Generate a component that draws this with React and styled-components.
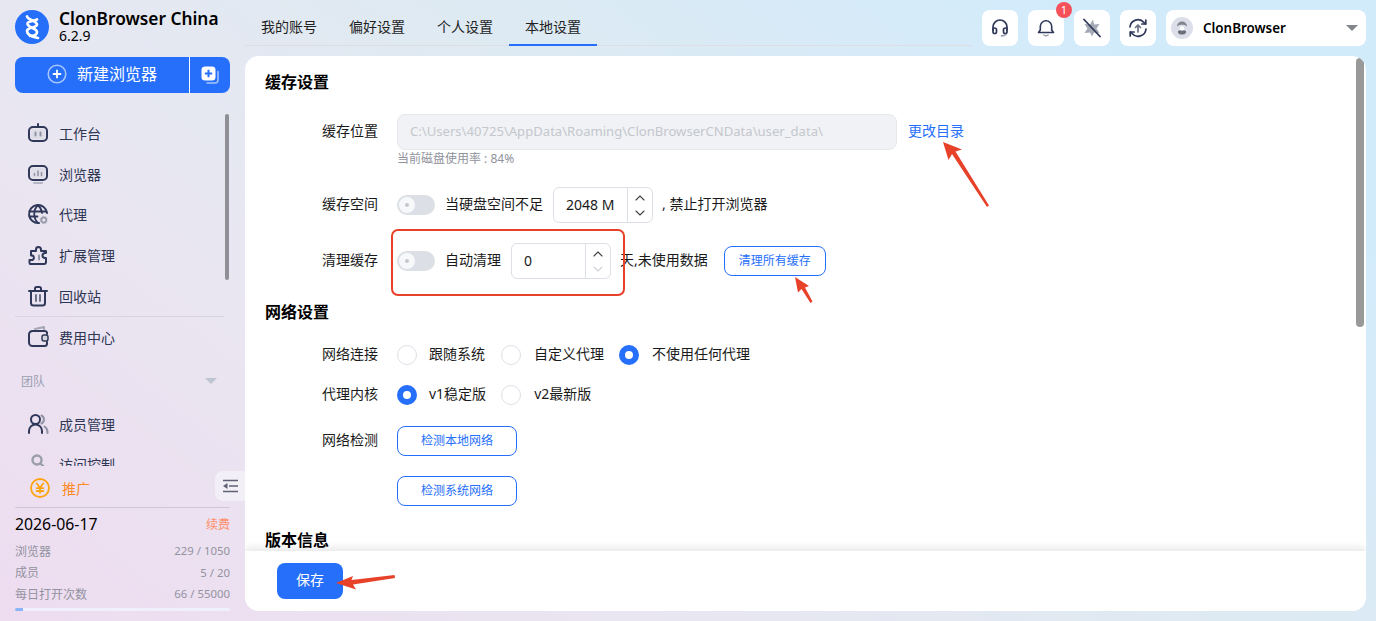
import React from "react";
import styled, { createGlobalStyle } from "styled-components";

const GlobalStyle = createGlobalStyle`
  html, body {
    margin: 0;
    padding: 0;
    width: 1376px;
    height: 621px;
    overflow: hidden;
  }
  body {
    font-family: "Noto Sans", "Noto Sans CJK SC", sans-serif;
    color: #1a1a1a;
  }
  * { box-sizing: border-box; }
`;

const BLUE = "#266ffb";
const NAVY = "#2f3859";

const Page = styled.div`
  position: relative;
  display: flex;
  width: 1376px;
  height: 621px;
  overflow: hidden;
  background: linear-gradient(38deg, #eedcf0 0%, #e9e6f1 30%, #dfeaf2 55%, #d2ebfb 85%, #d2ebfb 100%);
`;

/* sidebar */
const Sidebar = styled.aside`
  position: relative;
  display: flex;
  flex-direction: column;
  width: 245px;
  flex: none;
  padding: 10px 15px 0;
`;

const Brand = styled.div`
  display: flex;
  align-items: center;
  gap: 10px;
  height: 34px;
`;

const BrandText = styled.div`
  display: flex;
  flex-direction: column;
  color: #000;
`;

const BrandName = styled.div`
  font-size: 17.3px;
  font-weight: 600;
  line-height: 19px;
  margin-top: -2px;
  white-space: nowrap;
`;

const BrandVersion = styled.div`
  font-size: 14px;
  line-height: 16px;
`;

const NewButton = styled.div`
  display: flex;
  height: 36px;
  margin-top: 13px;
  border-radius: 8px;
  overflow: hidden;
  background: ${BLUE};
  color: #fff;
  flex: none;
`;

const NewMain = styled.div`
  display: flex;
  align-items: center;
  justify-content: center;
  gap: 10px;
  width: 175px;
  font-size: 16px;
  line-height: 34px;
  padding-bottom: 2px;
  border-right: 1px solid #fff;
`;

const NewCopy = styled.div`
  flex: 1;
  display: flex;
  align-items: center;
  justify-content: center;
`;

const NavArea = styled.nav`
  position: relative;
  flex: none;
  height: 373px;
  overflow: hidden;
  margin-right: -15px;
  padding-top: 20px;
`;

const NavItem = styled.div`
  display: flex;
  align-items: center;
  gap: 10px;
  height: 40.6px;
  padding-left: 12px;
  font-size: 14px;
  color: #2f3654;
`;

const NavDivider = styled.div`
  width: 209px;
  height: 1px;
  background: #d8d5e0;
`;

const NavGroup = styled.div`
  display: flex;
  align-items: center;
  justify-content: space-between;
  width: 209px;
  height: 20px;
  margin: 13px 0;
  padding: 0 7px 0 6px;
  font-size: 12px;
  color: #9a9fb0;
`;

const GroupCaret = styled.span`
  width: 0;
  height: 0;
  border-left: 6px solid transparent;
  border-right: 6px solid transparent;
  border-top: 6px solid #bfc4d2;
`;

const NavScroll = styled.div`
  position: absolute;
  left: 210px;
  top: 21px;
  width: 4px;
  height: 166px;
  border-radius: 2px;
  background: #908f96;
`;

const Promo = styled.div`
  display: flex;
  align-items: center;
  gap: 12px;
  height: 30px;
  margin-top: 7px;
  padding-left: 15px;
  font-size: 14px;
  color: #ff8a1f;
`;

const Collapse = styled.div`
  position: absolute;
  left: 215px;
  top: 471px;
  display: flex;
  align-items: center;
  justify-content: center;
  width: 30px;
  height: 30px;
  border-radius: 8px 0 0 8px;
  background: #f2eff6;
`;

const PlanBox = styled.div`
  margin-top: 4px;
  border-top: 1px solid #cdc8d2;
`;

const PlanHead = styled.div`
  display: flex;
  align-items: center;
  justify-content: space-between;
  height: 22px;
  margin-top: 5px;
  margin-bottom: 5px;
`;

const PlanDate = styled.span`
  font-size: 15.8px;
  color: #000;
`;

const Renew = styled.span`
  font-size: 12px;
  color: #ff8f6b;
`;

const PlanRow = styled.div`
  display: flex;
  align-items: center;
  justify-content: space-between;
  height: 21.5px;
  font-size: 12px;
  color: #92939f;
`;

const PlanCount = styled.span`
  font-size: 11.4px;
`;

const Progress = styled.div`
  height: 3px;
  margin-top: 3px;
  border-radius: 2px;
  background: #eff0fb;
  overflow: hidden;
`;

const ProgressFill = styled.div`
  height: 100%;
  background: #8ab4fb;
`;

/* main column */
const Main = styled.main`
  flex: 1;
  display: flex;
  flex-direction: column;
  padding-right: 10px;
  min-width: 0;
`;

const TopBar = styled.header`
  display: flex;
  height: 56px;
  flex: none;
`;

const Tabs = styled.div`
  display: flex;
  align-items: flex-start;
  width: 727px;
  height: 46px;
  border-bottom: 1px solid #dcdee4;
  flex: none;
`;

const Tab = styled.div`
  width: 88px;
  height: 46px;
  flex: none;
  font-size: 14px;
  line-height: 53px;
  text-align: center;
  color: #1f1f1f;
  border-bottom: 2px solid ${(p) => (p.$active ? BLUE : "transparent")};
`;

const Tools = styled.div`
  display: flex;
  gap: 10px;
  margin-left: 10px;
  padding-top: 10px;
`;

const ToolButton = styled.div`
  position: relative;
  display: flex;
  align-items: center;
  justify-content: center;
  width: 36px;
  height: 36px;
  border-radius: 8px;
  background: #fff;
`;

const Badge = styled.span`
  position: absolute;
  top: -8px;
  right: -8px;
  width: 16px;
  height: 16px;
  border-radius: 50%;
  background: #f5515a;
  color: #fff;
  font-size: 11px;
  line-height: 16px;
  text-align: center;
`;

const UserMenu = styled.div`
  display: flex;
  align-items: center;
  width: 200px;
  height: 36px;
  padding: 0 8px 0 5px;
  border-radius: 8px;
  background: #fff;
`;

const UserName = styled.span`
  flex: 1;
  margin-left: 10px;
  font-size: 13.4px;
  font-weight: 600;
  color: #000;
`;

const UserCaret = styled.span`
  width: 0;
  height: 0;
  border-left: 6px solid transparent;
  border-right: 6px solid transparent;
  border-top: 6px solid #83858c;
`;

/* settings panel */
const Panel = styled.section`
  position: relative;
  display: flex;
  flex-direction: column;
  width: 1121px;
  height: 555px;
  border-radius: 14px;
  background: #fff;
  overflow: hidden;
`;

const PanelBody = styled.div`
  flex: 1;
  min-height: 0;
  overflow: hidden;
  padding: 14px 0 0 20px;
`;

const SectionTitle = styled.h2`
  margin: ${(p) => p.$top || 0}px 0 0;
  height: 24px;
  font-size: 16px;
  font-weight: 700;
  line-height: 25px;
  color: #000;
`;

const Row = styled.div`
  display: flex;
  align-items: center;
  height: ${(p) => p.$height || 36}px;
  margin-top: ${(p) => p.$top || 0}px;
`;

const Label = styled.div`
  width: 113px;
  margin-right: 19px;
  flex: none;
  text-align: right;
  font-size: 14px;
  line-height: 20px;
  padding-bottom: 2px;
  color: #1a1a1a;
`;

const Hint = styled.div`
  height: 16px;
  padding-left: 132px;
  font-size: 12px;
  line-height: 17px;
  color: #8f939c;
`;

const PathInput = styled.div`
  width: 500px;
  height: 36px;
  padding-left: 12px;
  border: 1px solid #e6e8ec;
  border-radius: 8px;
  background: #f1f2f5;
  font-size: 13.1px;
  line-height: 33px;
  color: #c4c7cd;
`;

const LinkText = styled.span`
  margin-left: 11px;
  font-size: 14px;
  line-height: 20px;
  padding-bottom: 2px;
  color: ${BLUE};
`;

const Toggle = styled.span`
  display: flex;
  align-items: center;
  width: 38px;
  height: 20px;
  padding-left: 2px;
  border-radius: 10px;
  background: #dcdfe5;
  flex: none;
`;

const ToggleKnob = styled.span`
  display: block;
  width: 16px;
  height: 16px;
  border: 6px solid #f7f8fa;
  border-radius: 50%;
  background: #c4c7cd;
`;

const InlineText = styled.span`
  margin-left: ${(p) => p.$left || 0}px;
  font-size: 14px;
  line-height: 20px;
  padding-bottom: 2px;
  white-space: nowrap;
  color: #1a1a1a;
`;

const Stepper = styled.div`
  display: flex;
  width: 100px;
  height: 36px;
  margin-left: ${(p) => p.$left || 0}px;
  border: 1px solid #dcdfe5;
  border-radius: 6px;
  flex: none;
`;

const StepValue = styled.div`
  flex: 1;
  padding-left: 12px;
  font-size: 14px;
  line-height: 33px;
  color: #1a1a1a;
`;

const StepArrows = styled.div`
  display: flex;
  flex-direction: column;
  align-items: center;
  justify-content: space-around;
  width: 25px;
  padding: 2px 0;
  border-left: 1px solid #dcdfe5;
`;

const OutlineButton = styled.div`
  width: ${(p) => p.$width}px;
  height: 30px;
  margin-left: ${(p) => p.$left || 0}px;
  border: 1px solid ${BLUE};
  border-radius: 8px;
  font-size: 12px;
  line-height: 27px;
  text-align: center;
  color: ${BLUE};
  flex: none;
`;

const Radio = styled.span`
  display: block;
  width: 20px;
  height: 20px;
  border-radius: 50%;
  flex: none;
  margin-left: ${(p) => p.$left || 0}px;
  background: #fff;
  border: ${(p) => (p.$on ? `6px solid ${BLUE}` : "1px solid #dcdfe5")};
`;

const Footer = styled.div`
  position: relative;
  display: flex;
  align-items: center;
  flex: none;
  height: 60px;
  padding-left: 32px;
  background: #fff;
  box-shadow: 0 -3px 8px rgba(0, 0, 0, 0.1);
`;

const SaveButton = styled.div`
  width: 66px;
  height: 36px;
  border-radius: 8px;
  background: ${BLUE};
  color: #fff;
  font-size: 14px;
  line-height: 34px;
  text-align: center;
`;

const PanelScroll = styled.div`
  position: absolute;
  right: 2px;
  top: 2px;
  width: 8px;
  height: 269px;
  border-radius: 4px;
  background: #999;
`;

/* red marks drawn on top of the screenshot */
const Marks = styled.svg`
  position: absolute;
  left: 0;
  top: 0;
  width: 1376px;
  height: 621px;
  pointer-events: none;
`;

const Logo = () => (
  <svg width="34" height="34" viewBox="0 0 34 34">
    <circle cx="17" cy="17" r="17" fill={BLUE} />
    <g fill="none" stroke="#fff" strokeWidth="2.700" strokeLinecap="round">
      <path d="M12 6.500C13 10.500 21.500 10 22 14.500C22 18 12 17 12 21C12 25 18 27 23 28" />
      <path d="M22 9.500C18 11.500 12 11 12.500 14C13.500 18 22 18 22 22C22 25 18 26 15 26" />
    </g>
  </svg>
);

const Svg = ({ size = 22, children }) => (
  <svg
    width={size}
    height={size}
    viewBox="0 0 22 22"
    fill="none"
    stroke={NAVY}
    strokeWidth="2"
    strokeLinecap="round"
    strokeLinejoin="round"
  >
    {children}
  </svg>
);

const RobotIcon = () => (
  <Svg>
    <path d="M11 2v2" />
    <rect x="2" y="5" width="18" height="14" rx="4" />
    <rect x="4" y="7" width="14" height="10" rx="2.500" fill="#d9d9e3" stroke="none" opacity="0.6" />
    <path d="M8.500 10.500v3M13.500 10.500v3" stroke="#8f93a3" />
  </Svg>
);

const MonitorIcon = () => (
  <Svg>
    <rect x="2" y="3" width="18" height="14" rx="4" />
    <rect x="4" y="5" width="14" height="10" rx="2.500" fill="#d9d9e3" stroke="none" opacity="0.6" />
    <path d="M7.500 12.500v-2M11 12.500v-4.500M14.500 12.500v-3" stroke="#8f93a3" strokeWidth="1.500" />
    <path d="M7 20h8" stroke="#b4b7c4" />
  </Svg>
);

const GlobeIcon = () => (
  <Svg>
    <path d="M12 20a9 9 0 1 1 8-10" />
    <path d="M2.500 8.500h17M2.500 13.500h8M11 2c-5 5-5 13 0 18M11 2c2.500 2.500 3.700 5 4 8" strokeWidth="1.800" />
    <circle cx="16.800" cy="17" r="4.200" fill="#9c9fae" stroke="#eae6f1" strokeWidth="1" />
    <circle cx="16.800" cy="17" r="1.500" fill="#eae6f1" stroke="none" />
  </Svg>
);

const PuzzleIcon = () => (
  <Svg>
    <path d="M3 20h14a2 2 0 0 0 2-2v-4h-1a2.500 2.500 0 0 1 0-5h1V7h-5V5.500a2.500 2.500 0 0 0-5 0V7H4v4.500h1.500a2.500 2.500 0 0 1 0 4.500H2.500V19" />
    <path d="M12 11.500v4" stroke="#8f93a3" />
  </Svg>
);

const TrashIcon = () => (
  <Svg>
    <path d="M2 6h18M8 5V3.500A1.500 1.500 0 0 1 9.500 2h3A1.500 1.500 0 0 1 14 3.500V5" />
    <path d="M4 6v12a2.500 2.500 0 0 0 2.500 2.500h9A2.500 2.500 0 0 0 18 18V6" />
    <path d="M9 10v6M13 10v6" stroke="#6d7286" />
  </Svg>
);

const WalletIcon = () => (
  <Svg>
    <path d="M20 8V6.500A2.500 2.500 0 0 0 17.500 5H5.500A3.500 3.500 0 0 0 2 8.500v8A3.500 3.500 0 0 0 5.500 20h12a2.500 2.500 0 0 0 2.500-2.500V16" />
    <path d="M8 3l9-2v2" stroke="#a3a6b5" />
    <rect x="15" y="9" width="6" height="6" rx="2" fill="#d4d4df" stroke={NAVY} strokeWidth="1.500" />
  </Svg>
);

const UsersIcon = () => (
  <Svg>
    <circle cx="8.500" cy="6.500" r="4.500" />
    <path d="M2 20v-2a6.500 6.500 0 0 1 13 0v2" />
    <path d="M14.500 2.500a4.500 4.500 0 0 1 0 8M17.500 13.500a6.500 6.500 0 0 1 3 5.500v1" stroke="#8f93a3" />
  </Svg>
);

const SearchIcon = () => (
  <svg width="22" height="22" viewBox="0 0 22 22" fill="none" stroke="#9b9eab" strokeWidth="2.400" strokeLinecap="round">
    <circle cx="10" cy="7" r="4.500" />
    <path d="M14 11l3 3" />
  </svg>
);

const YuanIcon = () => (
  <svg width="20" height="20" viewBox="0 0 20 20" fill="none" stroke="#ffa514" strokeWidth="1.800" strokeLinecap="round" strokeLinejoin="round">
    <circle cx="10" cy="10" r="9" />
    <path d="M6.800 5.500L10 9.800l3.200-4.300M6.800 10.200h6.400M6.800 13h6.400M10 9.800v5" />
  </svg>
);

const CollapseIcon = () => (
  <svg width="16" height="14" viewBox="0 0 16 14" fill="none" stroke="#5f6274" strokeWidth="1.600">
    <path d="M1 1.500h15M7 7h9M1 12.500h15" />
    <path d="M1 7l4.500-3v6z" fill="#5f6274" stroke="none" />
  </svg>
);

const PlusCircleIcon = () => (
  <svg width="20" height="20" viewBox="0 0 20 20" fill="none">
    <circle cx="10" cy="10" r="8.800" stroke="#a8c6fd" strokeWidth="1.600" />
    <path d="M10 5.800v8.400M5.800 10h8.400" stroke="#fff" strokeWidth="1.800" />
  </svg>
);

const CopyPlusIcon = () => (
  <svg width="20" height="20" viewBox="0 0 20 20" fill="none">
    <path d="M18 6.500v8.500a3 3 0 0 1-3 3H7" stroke="#a8c6fd" strokeWidth="1.500" strokeLinecap="round" />
    <rect x="1.500" y="1.500" width="14" height="14" rx="3.500" fill="#fff" />
    <path d="M8.500 4.800v7.400M4.800 8.500h7.400" stroke={BLUE} strokeWidth="2" />
  </svg>
);

const HeadsetIcon = () => (
  <svg width="18" height="18" viewBox="0 0 18 18" fill="none" stroke={NAVY} strokeWidth="1.700" strokeLinecap="round">
    <path d="M2 11V8a7 7 0 0 1 14 0v3" />
    <rect x="2" y="9" width="3.500" height="5.500" rx="1.700" />
    <rect x="12.500" y="9" width="3.500" height="5.500" rx="1.700" />
    <path d="M15 15.500c-1 1-2.500 1.300-4.500 1.300" stroke="#9a9eae" />
  </svg>
);

const BellIcon = () => (
  <svg width="18" height="18" viewBox="0 0 18 18" fill="none" stroke={NAVY} strokeWidth="1.600" strokeLinecap="round" strokeLinejoin="round">
    <path d="M1.500 13.500h15l-1.800-2.500V7.500a5.700 5.700 0 0 0-11.400 0V11z" />
    <path d="M7 16c1 .8 3 .8 4 0" stroke="#9a9eae" />
  </svg>
);

const PinOffIcon = () => (
  <svg width="20" height="20" viewBox="0 0 20 20" fill="none" strokeLinecap="round">
    <path d="M11 1.500l1 5 5.500-.5-3 4.500 3 4.500-5.500-.5-2 4-2-4-5.500.5 3-4.500-3-4.500 5.500.5z" fill="#a5a8b5" />
    <path d="M2 1.500l16 17" stroke="#2f3859" strokeWidth="1.800" />
  </svg>
);

const SyncIcon = () => (
  <svg width="20" height="20" viewBox="0 0 20 20" fill="none" stroke={NAVY} strokeWidth="1.700" strokeLinecap="round" strokeLinejoin="round">
    <path d="M2 9a8 8 0 0 1 14-4.500l1.500 1.500M18 11a8 8 0 0 1-14 4.500L2.500 14" />
    <path d="M17.800 2v4h-4M2.200 18v-4h4" />
    <path d="M10 14V7M7.500 9.500L10 7l2.500 2.500" stroke="#6d7286" />
  </svg>
);

const Avatar = () => (
  <svg width="22" height="22" viewBox="0 0 22 22">
    <circle cx="11" cy="11" r="11" fill="#dcdfea" />
    <path d="M6 9.500a5 5 0 0 1 10 0c-1.500-1.500-3-1.800-5-1.800s-3.500.3-5 1.800z" fill="#80828c" />
    <path d="M7 14c2-1.500 6-1.500 8 0v1.500a3 3 0 0 1-3 2h-2a3 3 0 0 1-3-2z" fill="#6c6e78" />
    <circle cx="11" cy="11.500" r="2.300" fill="#fff" />
  </svg>
);

const Chevron = ({ up, faint }) => (
  <svg width="10" height="6" viewBox="0 0 10 6" fill="none" stroke={faint ? "#cfd2d8" : "#444"} strokeWidth="1.100" strokeLinecap="round" strokeLinejoin="round">
    <path d={up ? "M1 5l4-4 4 4" : "M1 1l4 4 4-4"} />
  </svg>
);

const navTop = [
  { icon: RobotIcon, label: "工作台" },
  { icon: MonitorIcon, label: "浏览器" },
  { icon: GlobeIcon, label: "代理" },
  { icon: PuzzleIcon, label: "扩展管理" },
  { icon: TrashIcon, label: "回收站" },
];

const planRows = [
  ["浏览器", "229 / 1050"],
  ["成员", "5 / 20"],
  ["每日打开次数", "66 / 55000"],
];

const tabs = ["我的账号", "偏好设置", "个人设置", "本地设置"];

const NumberBox = ({ value, left, downFaint }) => (
  <Stepper $left={left}>
    <StepValue>{value}</StepValue>
    <StepArrows>
      <Chevron up />
      <Chevron faint={downFaint} />
    </StepArrows>
  </Stepper>
);

const SwitchOff = () => (
  <Toggle>
    <ToggleKnob />
  </Toggle>
);

export default function App() {
  return (
    <Page>
      <GlobalStyle />
      <Sidebar>
        <Brand>
          <Logo />
          <BrandText>
            <BrandName>ClonBrowser China</BrandName>
            <BrandVersion>6.2.9</BrandVersion>
          </BrandText>
        </Brand>
        <NewButton>
          <NewMain>
            <PlusCircleIcon />
            新建浏览器
          </NewMain>
          <NewCopy>
            <CopyPlusIcon />
          </NewCopy>
        </NewButton>
        <NavArea>
          {navTop.map((item) => (
            <NavItem key={item.label}>
              <item.icon />
              {item.label}
            </NavItem>
          ))}
          <NavDivider />
          <NavItem>
            <WalletIcon />
            费用中心
          </NavItem>
          <NavGroup>
            团队
            <GroupCaret />
          </NavGroup>
          <NavItem>
            <UsersIcon />
            成员管理
          </NavItem>
          <NavItem>
            <SearchIcon />
            访问控制
          </NavItem>
          <NavScroll />
        </NavArea>
        <Promo>
          <YuanIcon />
          推广
        </Promo>
        <Collapse>
          <CollapseIcon />
        </Collapse>
        <PlanBox>
          <PlanHead>
            <PlanDate>2026-06-17</PlanDate>
            <Renew>续费</Renew>
          </PlanHead>
          {planRows.map(([name, count]) => (
            <PlanRow key={name}>
              <span>{name}</span>
              <PlanCount>{count}</PlanCount>
            </PlanRow>
          ))}
          <Progress>
            <ProgressFill style={{ width: `${(66 / 55000) * 100 + 3.8}%` }} />
          </Progress>
        </PlanBox>
      </Sidebar>

      <Main>
        <TopBar>
          <Tabs>
            {tabs.map((tab) => (
              <Tab key={tab} $active={tab === "本地设置"}>
                {tab}
              </Tab>
            ))}
          </Tabs>
          <Tools>
            <ToolButton>
              <HeadsetIcon />
            </ToolButton>
            <ToolButton>
              <BellIcon />
              <Badge>1</Badge>
            </ToolButton>
            <ToolButton>
              <PinOffIcon />
            </ToolButton>
            <ToolButton>
              <SyncIcon />
            </ToolButton>
            <UserMenu>
              <Avatar />
              <UserName>ClonBrowser</UserName>
              <UserCaret />
            </UserMenu>
          </Tools>
        </TopBar>

        <Panel>
          <PanelBody>
            <SectionTitle>缓存设置</SectionTitle>
            <Row $top={20}>
              <Label>缓存位置</Label>
              <PathInput>C:\Users\40725\AppData\Roaming\ClonBrowserCNData\user_data\</PathInput>
              <LinkText>更改目录</LinkText>
            </Row>
            <Hint>当前磁盘使用率 : 84%</Hint>
            <Row $top={21}>
              <Label>缓存空间</Label>
              <SwitchOff />
              <InlineText $left={10}>当硬盘空间不足</InlineText>
              <NumberBox value="2048 M" left={10} />
              <InlineText $left={9}>, 禁止打开浏览器</InlineText>
            </Row>
            <Row $top={20}>
              <Label>清理缓存</Label>
              <SwitchOff />
              <InlineText $left={10}>自动清理</InlineText>
              <NumberBox value="0" left={10} downFaint />
              <InlineText $left={9}>天,未使用数据</InlineText>
              <OutlineButton $width={102} $left={16}>清理所有缓存</OutlineButton>
            </Row>

            <SectionTitle $top={21}>网络设置</SectionTitle>
            <Row $height={40} $top={11}>
              <Label>网络连接</Label>
              <Radio />
              <InlineText $left={12}>跟随系统</InlineText>
              <Radio $left={16} />
              <InlineText $left={13}>自定义代理</InlineText>
              <Radio $on $left={15} />
              <InlineText $left={13}>不使用任何代理</InlineText>
            </Row>
            <Row $height={40}>
              <Label>代理内核</Label>
              <Radio $on />
              <InlineText $left={12}>v1稳定版</InlineText>
              <Radio $left={15} />
              <InlineText $left={13}>v2最新版</InlineText>
            </Row>
            <Row $height={30} $top={11}>
              <Label>网络检测</Label>
              <OutlineButton $width={120}>检测本地网络</OutlineButton>
            </Row>
            <Row $height={30} $top={20}>
              <Label />
              <OutlineButton $width={120}>检测系统网络</OutlineButton>
            </Row>
            <SectionTitle $top={22}>版本信息</SectionTitle>
          </PanelBody>
          <Footer>
            <SaveButton>保存</SaveButton>
          </Footer>
          <PanelScroll />
        </Panel>
      </Main>

      <Marks viewBox="0 0 1376 621">
        <rect x="392" y="230" width="232" height="65" rx="6" fill="none" stroke="#e8412a" strokeWidth="2" />
        <g fill="#e8412a">
          <path d="M943 142l19 7.500-6.500 2 33.500 54-2 1.500-35-53-3.500 6z" />
          <path d="M795 277l14 9-4 1.500 7.500 14-2 1.500-9-14-3.500 3.500z" />
          <path d="M336 583l17-7-1.500 4 43-5 .5 3-42 6.500 3 5z" />
        </g>
      </Marks>
    </Page>
  );
}
